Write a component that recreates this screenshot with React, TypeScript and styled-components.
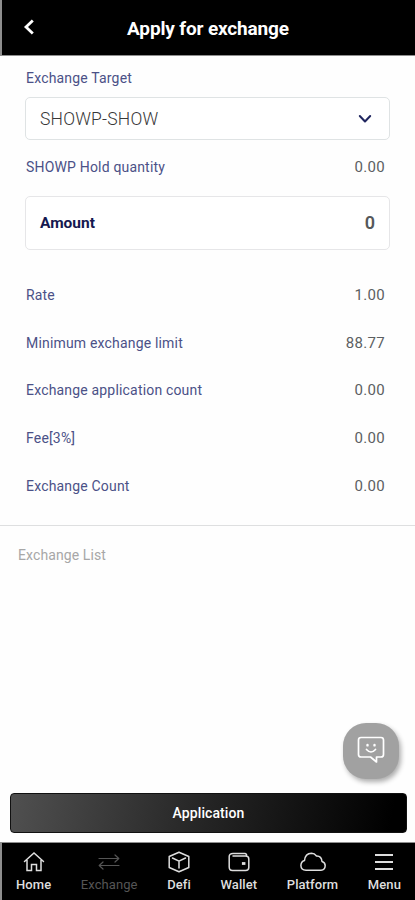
import React from "react";
import styled, { createGlobalStyle } from "styled-components";

const GlobalStyle = createGlobalStyle`
  *, *::before, *::after { box-sizing: border-box; }
  body { margin: 0; background: #fefefe; font-family: Roboto, "Liberation Sans", sans-serif; }
  button { font-family: inherit; }
`;

const Screen = styled.div`
  display: flex;
  flex-direction: column;
  height: 900px;
  width: 415px;
  background: #fefefe;
  overflow: hidden;
`;

const Header = styled.header`
  display: grid;
  grid-template-columns: 58px 1fr 59px;
  align-items: center;
  height: 56px;
  flex: none;
  background: #000;
  border-left: 2px solid #8e8e8e;
  border-bottom: 1px solid #8e8e8e;
`;

const BackButton = styled.button`
  display: flex;
  padding: 0 0 1px 21px;
  border: 0;
  background: none;
`;

const Title = styled.h1`
  margin: 2px 0 0;
  text-align: center;
  color: #fff;
  font-size: 19px;
  line-height: 24px;
  font-weight: 700;
  letter-spacing: -0.15px;
`;

const Form = styled.main`
  display: flex;
  flex-direction: column;
  padding: 12px 25px 0;
  height: 469px;
  flex: none;
`;

const Label = styled.span`
  color: #4b5187;
  font-size: 14px;
  line-height: 20px;
  letter-spacing: 0.18px;
  padding-left: 1px;
`;

const Select = styled.button`
  display: flex;
  align-items: center;
  justify-content: space-between;
  height: 43px;
  margin-top: 9px;
  padding: 0 17px 0 14px;
  border: 1px solid #dfe3e4;
  border-radius: 5px;
  background: #fff;
  color: #383838;
  font-size: 17.5px;
  font-weight: 300;
  letter-spacing: 0.2px;
`;

const Row = styled.div`
  display: flex;
  align-items: center;
  justify-content: space-between;
  height: 20px;
  padding-right: 5px;
`;

const HoldRow = styled(Row)`
  margin-top: 17px;
`;

const Value = styled.span`
  color: #5c5f62;
  font-size: 15px;
  line-height: 20px;
  letter-spacing: 0.3px;
`;

const AmountBox = styled.div`
  display: flex;
  align-items: center;
  justify-content: space-between;
  height: 54px;
  margin-top: 19px;
  padding: 0 14px 1px;
  border: 1px solid #e6e6e8;
  border-radius: 5px;
  background: #fff;
`;

const AmountLabel = styled.strong`
  color: #15184f;
  font-size: 15.5px;
  font-weight: 700;
`;

const AmountValue = styled.strong`
  color: #55585a;
  font-size: 18px;
  font-weight: 600;
`;

const Details = styled.div`
  display: flex;
  flex-direction: column;
  gap: 27.7px;
  margin-top: 35px;
`;

const ListSection = styled.section`
  flex: 1;
  border-top: 1px solid #dedfe0;
  padding: 19px 18px;
`;

const ListTitle = styled.span`
  display: block;
  color: #a7a7a7;
  font-size: 14px;
  line-height: 20px;
  letter-spacing: 0.1px;
`;

const ChatButton = styled.button`
  position: absolute;
  left: 343px;
  top: 723px;
  display: flex;
  align-items: center;
  justify-content: center;
  width: 56px;
  height: 56px;
  padding: 0 0 3px;
  border: 0;
  border-radius: 23px;
  background: #a1a1a1;
  box-shadow: 2px 3px 5px rgba(0, 0, 0, 0.32);
`;

const Submit = styled.button`
  flex: none;
  height: 40px;
  margin: 0 8px 9px 10px;
  padding: 0;
  border: 1px solid #111;
  border-radius: 4px;
  background: linear-gradient(100deg, #505050 0%, #242424 50%, #000 96%);
  color: #fff;
  font-size: 14px;
  font-weight: 500;
  letter-spacing: 0.1px;
`;

const Nav = styled.nav`
  display: flex;
  justify-content: space-between;
  flex: none;
  height: 58px;
  padding: 9px 14px 0;
  background: #000;
  border-top: 1px solid #8e8e8e;
  border-left: 2px solid #8e8e8e;
`;

const NavItem = styled.a<{ $active?: boolean }>`
  display: flex;
  flex-direction: column;
  align-items: center;
  color: ${(p) => (p.$active ? "#555" : "#dedede")};
  font-size: 13px;
  line-height: 18px;
  font-weight: ${(p) => (p.$active ? 400 : 500)};
  letter-spacing: 0.08px;
`;

const Glyph = styled.svg`
  display: block;
  fill: none;
  stroke: currentColor;
  stroke-width: 1.5;
  stroke-linejoin: round;
  stroke-linecap: round;
`;

const NavGlyph = styled(Glyph)`
  margin-bottom: 4px;
`;

const details = [
  ["Rate", "1.00"],
  ["Minimum exchange limit", "88.77"],
  ["Exchange application count", "0.00"],
  ["Fee[3%]", "0.00"],
  ["Exchange Count", "0.00"],
];

const navItems: { label: string; width: number; active?: boolean; icon: React.ReactNode }[] = [
  {
    label: "Home",
    width: 22,
    icon: <path d="M1.5 9.5 11 1l9.500 8.500M4 8v10.500h4.500v-6h5v6H18V8" strokeLinejoin="miter" />,
  },
  {
    label: "Exchange",
    width: 22,
    active: true,
    icon: <path d="M1 6.500h19.500M17 3 20.800 6.500 17 10M21 13.500H1.500M5 10 1.200 13.500 5 17" strokeWidth="1.2" />,
  },
  {
    label: "Defi",
    width: 22,
    icon: <path d="M11 .3 20.800 4.500v11L11 19.700 1.200 15.500V4.500ZM4.500 6 11 9.200l6.500-3.200M11 9.200v6.800" />,
  },
  {
    label: "Wallet",
    width: 22,
    icon: (
      <>
        <path d="M5 1.500h12q1.500 0 1.800 2.500M5 1.500Q1.200 1.500 1.200 4.500v10.500q0 3.500 3.300 3.500h13q3.300 0 3.300-3V7q0-3-3.300-3H5" />
        <path d="M15.300 11.500h.7" strokeWidth="2.800" strokeLinecap="square" />
      </>
    ),
  },
  {
    label: "Platform",
    width: 26,
    icon: <path d="M6 18.200Q1 18 .9 13.500 1 9.500 4.500 8.500 5.200 1.500 11.500 1.300q3 0 5 2.700 5-.2 5.500 5.500 3.200.8 3.200 4.200-.2 4.300-4.200 4.500Z" />,
  },
  {
    label: "Menu",
    width: 18,
    icon: <path d="M0 3h18M0 10h18M0 17h18" strokeLinecap="butt" strokeWidth="1.8" />,
  },
];

export default function App() {
  return (
    <Screen>
      <GlobalStyle />
      <Header>
        <BackButton aria-label="Back">
          <Glyph width="12" height="18" viewBox="0 0 12 18">
            <path d="M9.800 2.500 3 9l6.800 6.500" stroke="#fff" strokeWidth="2.800" strokeLinecap="butt" strokeLinejoin="miter" />
          </Glyph>
        </BackButton>
        <Title>Apply for exchange</Title>
      </Header>
      <Form>
        <Label>Exchange Target</Label>
        <Select>
          SHOWP-SHOW
          <Glyph width="14" height="10" viewBox="0 0 14 10">
            <path d="M1.800 2 7 7.500 12.200 2" stroke="#20265f" strokeWidth="2" />
          </Glyph>
        </Select>
        <HoldRow>
          <Label>SHOWP Hold quantity</Label>
          <Value>0.00</Value>
        </HoldRow>
        <AmountBox>
          <AmountLabel>Amount</AmountLabel>
          <AmountValue>0</AmountValue>
        </AmountBox>
        <Details>
          {details.map(([label, value]) => (
            <Row key={label}>
              <Label>{label}</Label>
              <Value>{value}</Value>
            </Row>
          ))}
        </Details>
      </Form>
      <ListSection>
        <ListTitle>Exchange List</ListTitle>
      </ListSection>
      <ChatButton aria-label="Chat">
        <Glyph width="28" height="28" viewBox="0 0 28 28">
          <path
            d="M4 1.500h20q2.500 0 2.500 2.500v14.500q0 2.500-2.500 2.500h-4.500v5l-6-5H4q-2.500 0-2.500-2.500V4q0-2.500 2.500-2.500Z"
            stroke="#fff"
            strokeWidth="1.700"
          />
          <path d="M9.500 13.500q4.500 5 9 0" stroke="#fff" strokeWidth="1.700" />
          <path d="M10.500 9v.4M17.500 9v.4" stroke="#fff" strokeWidth="2.400" />
        </Glyph>
      </ChatButton>
      <Submit>Application</Submit>
      <Nav>
        {navItems.map(({ label, width, active, icon }) => (
          <NavItem key={label} $active={active}>
            <NavGlyph width={width} height="20" viewBox={`0 0 ${width} 20`} overflow="visible">
              {icon}
            </NavGlyph>
            {label}
          </NavItem>
        ))}
      </Nav>
    </Screen>
  );
}
